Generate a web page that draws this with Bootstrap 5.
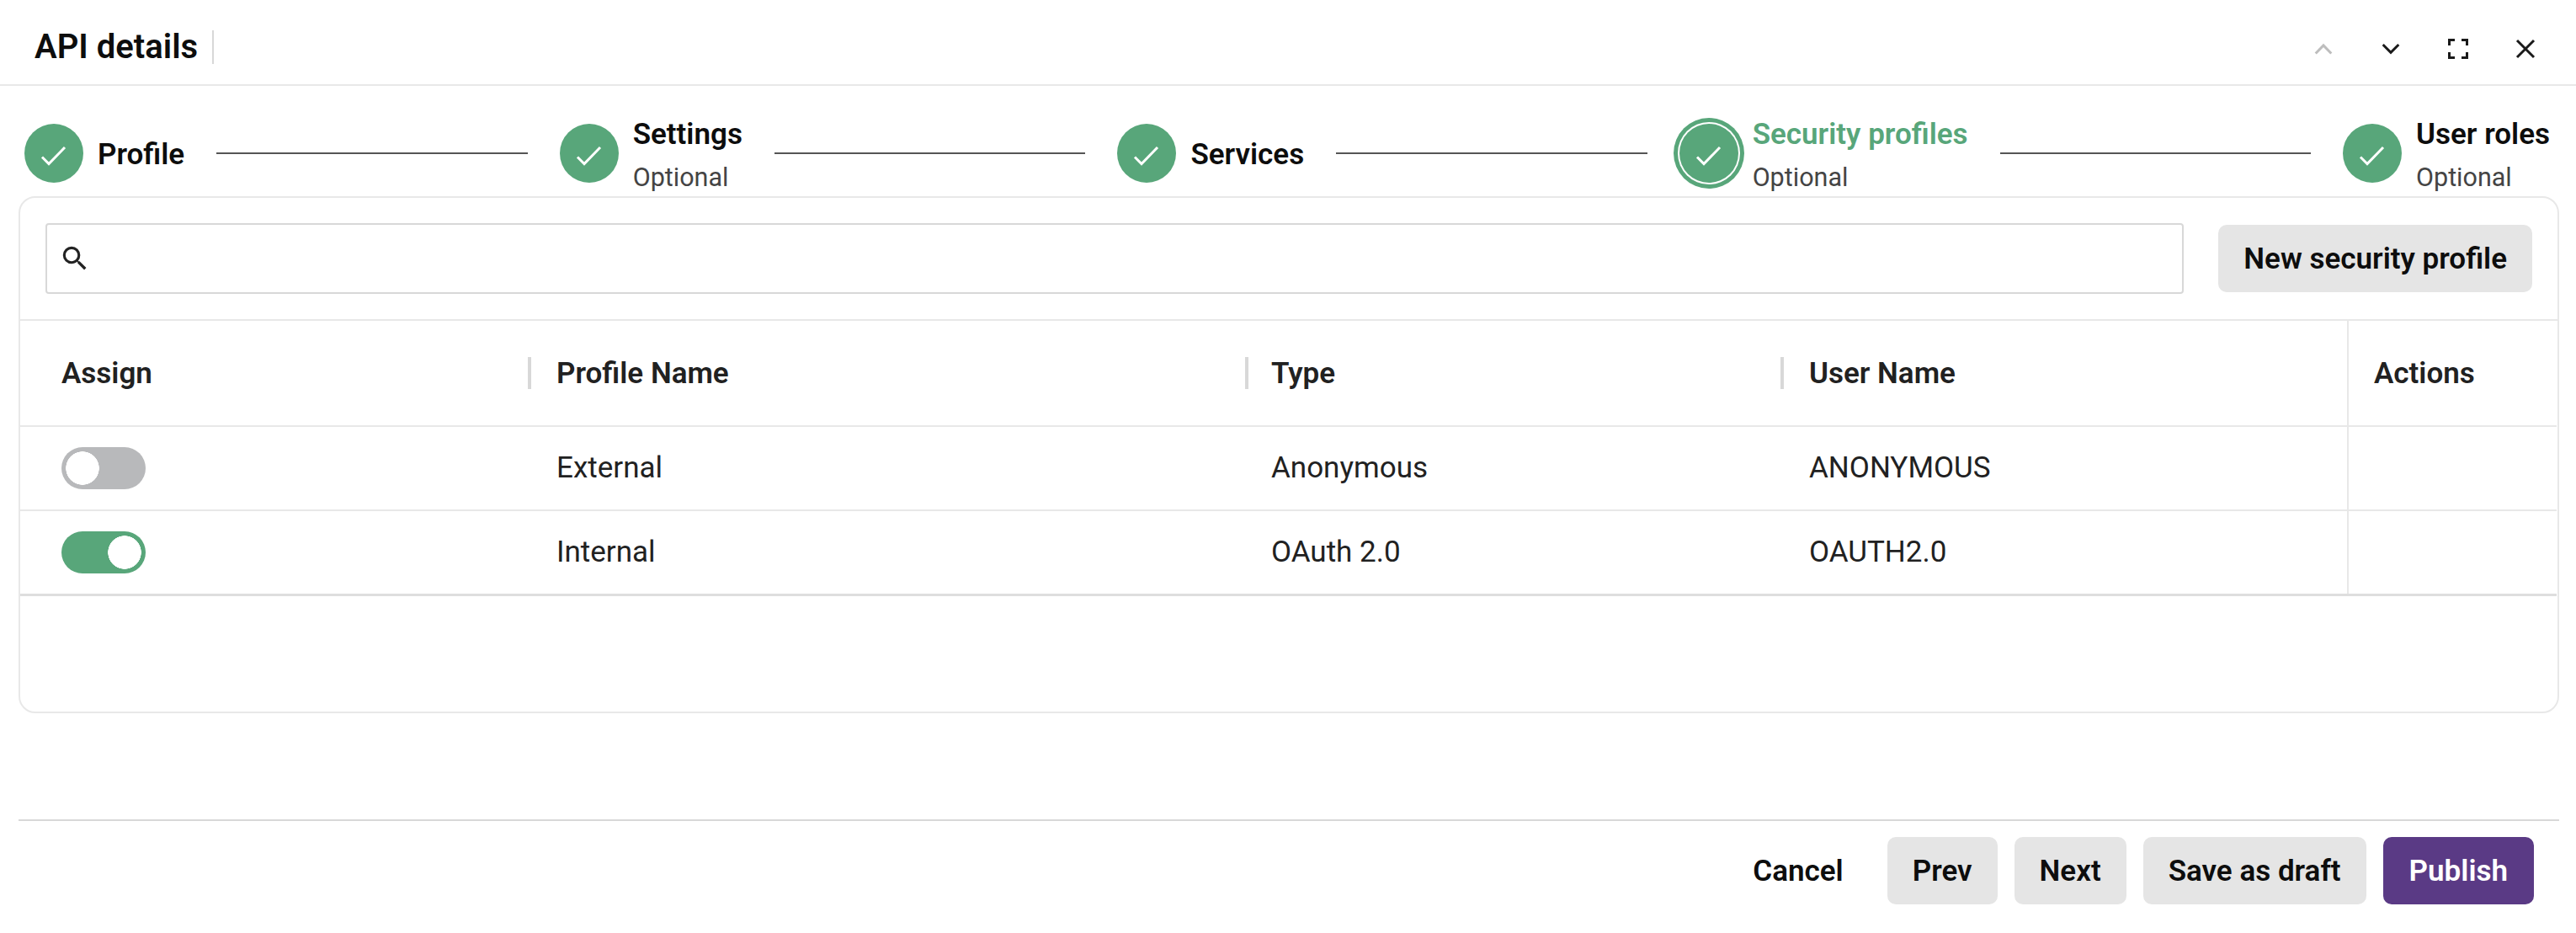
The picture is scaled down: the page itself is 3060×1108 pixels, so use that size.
<!DOCTYPE html>
<html lang="en">
<head>
<meta charset="utf-8">
<title>API details</title>
<link href="https://cdn.jsdelivr.net/npm/bootstrap@5.3.0/dist/css/bootstrap.min.css" rel="stylesheet">
<style>
body{font-family:Roboto,"Liberation Sans",sans-serif;background:#fff;color:#0d0d0d;font-size:32px;width:3060px;height:1108px;overflow:hidden}
.dlg-head{height:102px;border-bottom:2px solid #e8e8e8;padding:0 20px 0 41px}
.dlg-title{font-size:40px;font-weight:600;line-height:40px;margin:12px 0 0;padding-right:17px;border-right:2px solid #d8d8d8;color:#0d0d0d}
.head-tools{margin-top:10px}
.icon-btn{width:80px;height:60px;border:0;background:none;padding:0;color:#1a1a1a}
.icon-btn.is-off{color:#bdbdbd}
.stepper{height:131px;padding:29px 31px 0 29px;gap:38px}
.step{gap:17px}
.step-dot{width:70px;height:70px;border-radius:50%;background:#58a67a;flex:none;color:#fff}
.step-dot.is-current{box-shadow:0 0 0 2px #fff,0 0 0 7px #58a67a}
.step-title{font-size:35px;font-weight:600;line-height:46px;color:#0d0d0d;white-space:nowrap}
.step>.step-title{padding-top:4px}
.step-text .step-title{padding-top:2px}
.step-title.is-current{color:#58a67a}
.step-sub{font-size:30.5px;line-height:46px;margin-top:5px;color:#444;white-space:nowrap}
.step-text{margin-top:4px}
.step-line{flex:1 1 0;height:2px;background:#555}
.panel{margin:0 20px 0 22px;height:614px;border:2px solid #e8e8e8;border-radius:20px;overflow:hidden}
.tools{height:146px;padding:30px 30px 0 30px;gap:41px;border-bottom:2px solid #e8e8e8}
.search-box{flex:1 1 auto;height:84px}
.search-box .form-control{height:84px;border:2px solid #d8d8d8;border-radius:4px;padding-left:70px;font-size:32px}
.search-ico{position:absolute;left:16px;top:23px;width:38px;height:38px;color:#222}
.btn.soft{background:#e5e5e5;color:#0d0d0d;border:0;height:80px;padding:3px 30px 0;font-size:35px;font-weight:600;border-radius:10px;white-space:nowrap}
.tools .btn.soft{margin-top:2px}
.btn.plain{background:none;color:#0d0d0d;border:0;height:80px;padding:3px 30px 0;font-size:35px;font-weight:600}
.btn.primaryish{background:#5a3a85;color:#fff;border:0;height:80px;padding:3px 31px 0;font-size:35px;font-weight:600;border-radius:10px}
.data-grid{table-layout:fixed;width:3013px;margin:0;--bs-table-border-color:#e8e8e8;color:#212121}
.data-grid th,.data-grid td{font-size:35px;padding:0 0 0 31px;vertical-align:middle;border-bottom:2px solid #e8e8e8;color:#212121;box-shadow:none}
.data-grid th{height:125px;font-weight:600;font-size:35px;padding-top:3px}
.data-grid td{height:100px}
.data-grid tr>:first-child{padding-left:49px}
.data-grid tr>.wide-in{padding-left:34px}
.data-grid tr>.act{padding-left:30px}
.data-grid tbody tr:last-child td{border-bottom:3px solid #dedede}
.data-grid .sep{background:linear-gradient(#d8d8d8,#d8d8d8) no-repeat left center/4px 38px}
.data-grid .act{border-left:2px solid #e8e8e8}
.form-switch .form-check-input.flip{width:100px;height:50px;margin:0;border:0;border-radius:25px;background-color:#b8b9bb;background-image:radial-gradient(circle at 25px 25px,#fff 19.5px,transparent 20px);background-position:0 0;background-size:100px 50px;float:none;display:block}
.form-switch .form-check-input.flip:checked{background-color:#58a67a;background-image:radial-gradient(circle at 75px 25px,#fff 19.5px,transparent 20px);background-position:0 0}
.form-switch.flip-wrap{padding:0;margin:0;min-height:0}
.dlg-foot{margin:126px 20px 0 22px;border-top:2px solid #d8d8d8;padding:19px 30px 0 0;gap:20px}
.dlg-foot .plain{margin-right:2px}
.c1{width:603px}.c2{width:852px}.c3{width:636px}.c4{width:674px}.c5{width:248px}
</style>
</head>
<body>
<header class="dlg-head d-flex align-items-center justify-content-between">
  <h1 class="dlg-title">API details</h1>
  <div class="head-tools d-flex align-items-center">
    <button class="icon-btn is-off" aria-label="Previous"><svg width="24" height="24" viewBox="0 0 24 24" fill="none" stroke="currentColor" stroke-width="3"><path d="M2.7 17.5 12 8l9.3 9.5"/></svg></button>
    <button class="icon-btn" aria-label="Next"><svg width="24" height="24" viewBox="0 0 24 24" fill="none" stroke="currentColor" stroke-width="3"><path d="M2.7 7 12 16.3 21.3 7"/></svg></button>
    <button class="icon-btn" aria-label="Fullscreen"><svg width="24" height="24" viewBox="0 0 24 24" fill="none" stroke="currentColor" stroke-width="3"><path d="M1.5 8V1.5H8M16 1.5h6.5V8M22.5 16v6.5H16M8 22.5H1.5V16"/></svg></button>
    <button class="icon-btn" aria-label="Close"><svg width="24" height="24" viewBox="0 0 24 24" fill="none" stroke="currentColor" stroke-width="3"><path d="M2 2l20 20M22 2 2 22"/></svg></button>
  </div>
</header>

<nav class="stepper d-flex align-items-center">
  <div class="step d-flex align-items-center">
    <span class="step-dot"><svg width="70" height="70" viewBox="0 0 70 70" fill="none" stroke="currentColor" stroke-width="3"><path d="M21 39.5 29 47.5 48 28"/></svg></span>
    <div class="step-title">Profile</div>
  </div>
  <div class="step-line"></div>
  <div class="step d-flex align-items-center">
    <span class="step-dot"><svg width="70" height="70" viewBox="0 0 70 70" fill="none" stroke="currentColor" stroke-width="3"><path d="M21 39.5 29 47.5 48 28"/></svg></span>
    <div class="step-text"><div class="step-title">Settings</div><div class="step-sub">Optional</div></div>
  </div>
  <div class="step-line"></div>
  <div class="step d-flex align-items-center">
    <span class="step-dot"><svg width="70" height="70" viewBox="0 0 70 70" fill="none" stroke="currentColor" stroke-width="3"><path d="M21 39.5 29 47.5 48 28"/></svg></span>
    <div class="step-title">Services</div>
  </div>
  <div class="step-line"></div>
  <div class="step d-flex align-items-center">
    <span class="step-dot is-current"><svg width="70" height="70" viewBox="0 0 70 70" fill="none" stroke="currentColor" stroke-width="3"><path d="M21 39.5 29 47.5 48 28"/></svg></span>
    <div class="step-text"><div class="step-title is-current">Security profiles</div><div class="step-sub">Optional</div></div>
  </div>
  <div class="step-line"></div>
  <div class="step d-flex align-items-center">
    <span class="step-dot"><svg width="70" height="70" viewBox="0 0 70 70" fill="none" stroke="currentColor" stroke-width="3"><path d="M21 39.5 29 47.5 48 28"/></svg></span>
    <div class="step-text"><div class="step-title">User roles</div><div class="step-sub">Optional</div></div>
  </div>
</nav>

<section class="card panel">
  <div class="tools d-flex align-items-start">
    <div class="search-box position-relative">
      <svg class="search-ico" viewBox="0 0 24 24" fill="currentColor"><path d="M15.5 14h-.79l-.28-.27A6.471 6.471 0 0 0 16 9.5 6.5 6.5 0 1 0 9.5 16c1.61 0 3.09-.59 4.23-1.57l.27.28v.79l5 4.99L20.49 19l-4.99-5zm-6 0C7.01 14 5 11.99 5 9.5S7.01 5 9.5 5 14 7.01 14 9.5 11.99 14 9.5 14z"/></svg>
      <input class="form-control" type="text" aria-label="Search">
    </div>
    <button class="btn soft">New security profile</button>
  </div>
  <table class="table data-grid">
    <colgroup><col class="c1"><col class="c2"><col class="c3"><col class="c4"><col class="c5"></colgroup>
    <thead><tr><th>Assign</th><th class="sep wide-in">Profile Name</th><th class="sep">Type</th><th class="sep wide-in">User Name</th><th class="act">Actions</th></tr></thead>
    <tbody>
      <tr><td><div class="form-check form-switch flip-wrap"><input class="form-check-input flip" type="checkbox" aria-label="Assign External"></div></td><td class="wide-in">External</td><td>Anonymous</td><td class="wide-in">ANONYMOUS</td><td class="act"></td></tr>
      <tr><td><div class="form-check form-switch flip-wrap"><input class="form-check-input flip" type="checkbox" checked aria-label="Assign Internal"></div></td><td class="wide-in">Internal</td><td>OAuth 2.0</td><td class="wide-in">OAUTH2.0</td><td class="act"></td></tr>
    </tbody>
  </table>
</section>

<footer class="dlg-foot d-flex justify-content-end">
  <button class="btn plain">Cancel</button>
  <button class="btn soft">Prev</button>
  <button class="btn soft">Next</button>
  <button class="btn soft">Save as draft</button>
  <button class="btn primaryish">Publish</button>
</footer>
<script src="https://cdn.jsdelivr.net/npm/bootstrap@5.3.0/dist/js/bootstrap.bundle.min.js"></script>
</body>
</html>
